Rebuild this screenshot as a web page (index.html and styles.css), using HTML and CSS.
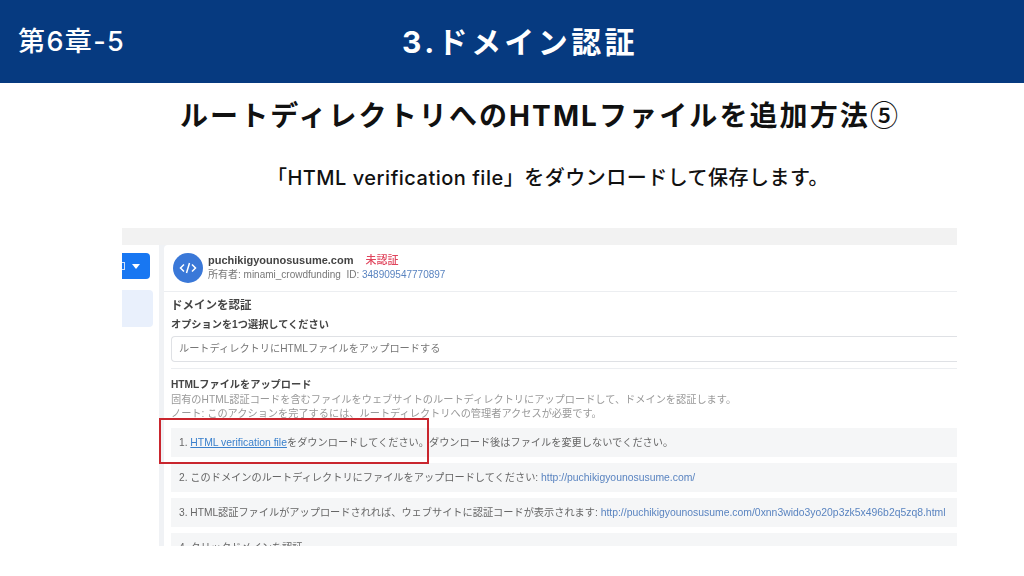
FILE: index.html
```html
<!DOCTYPE html>
<html lang="ja">
  <head>
    <meta charset="UTF-8" />
    <title>第6章-5 ドメイン認証</title>
    <link rel="stylesheet" href="styles.css">
  </head>
  <body>
    <div class="header">
      <div class="chapter">第6章-5</div>
      <h1 class="title">3.ドメイン認証</h1>
    </div>
    <h2 class="heading">ルートディレクトリへのHTMLファイルを追加方法<span class="circled">⑤</span></h2>
    <p class="lead">「HTML verification file」をダウンロードして保存します。</p>

    <div class="shot">
      <div class="shot-top"></div>
      <div class="shot-body">
        <div class="side">
          <div class="side-btn">
            <span class="side-btn-mark"></span>
            <span class="caret"></span>
          </div>
          <div class="side-item"></div>
        </div>
        <div class="card">
          <div class="domain">
            <div class="domain-icon">
              <svg width="18" height="14" viewBox="0 0 18 14" fill="none" stroke="#fff" stroke-width="1.5">
                <path d="M5 3.5 1.5 7 5 10.5M13 3.5 16.5 7 13 10.5M10.5 2 7.5 12" />
              </svg>
            </div>
            <div>
              <div class="domain-name">puchikigyounosusume.com<span class="unverified">未認証</span></div>
              <div class="domain-owner">所有者: minami_crowdfunding&nbsp; ID: <span class="link">348909547770897</span></div>
            </div>
          </div>
          <div class="card-main">
            <div class="label-big">ドメインを認証</div>
            <div class="label">オプションを1つ選択してください</div>
            <div class="select">ルートディレクトリにHTMLファイルをアップロードする</div>
            <div class="rule"></div>
            <div class="label label-upload">HTMLファイルをアップロード</div>
            <div class="desc">固有のHTML認証コードを含むファイルをウェブサイトのルートディレクトリにアップロードして、ドメインを認証します。</div>
            <div class="desc">ノート: このアクションを完了するには、ルートディレクトリへの管理者アクセスが必要です。</div>
            <div class="steps">
              <div class="step">1. <span class="link under">HTML verification file</span>をダウンロードしてください。ダウンロード後はファイルを変更しないでください。</div>
              <div class="step">2. このドメインのルートディレクトリにファイルをアップロードしてください: <span class="link">http://puchikigyounosusume.com/</span></div>
              <div class="step">3. HTML認証ファイルがアップロードされれば、ウェブサイトに認証コードが表示されます: <span class="link">http://puchikigyounosusume.com/0xnn3wido3yo20p3zk5x496b2q5zq8.html</span></div>
              <div class="step">4. クリックドメインを認証</div>
            </div>
          </div>
        </div>
      </div>
      <div class="redbox"></div>
    </div>
  </body>
</html>
```

FILE: styles.css
```css
* {
  margin: 0;
  padding: 0;
  box-sizing: border-box;
}
body {
  width: 1024px;
  height: 576px;
  overflow: hidden;
  background: #fff;
  font-family: "Inter", "Noto Sans CJK JP", sans-serif;
  color: #111;
}
.header {
  height: 83px;
  background: #063a80;
  color: #fff;
  position: relative;
  display: flex;
  justify-content: center;
  align-items: center;
  padding-left: 16px;
}
.chapter {
  position: absolute;
  left: 18px;
  top: 23px;
  font-size: 27px;
  line-height: 38px;
  letter-spacing: 1.4px;
  font-weight: 500;
}
.title {
  font-size: 30px;
  font-weight: 700;
  letter-spacing: 3.4px;
  line-height: 44px;
}
.heading {
  margin-top: 10px;
  height: 42px;
  padding-left: 56px;
  text-align: center;
  font-size: 28px;
  line-height: 42px;
  letter-spacing: 2.1px;
  font-weight: 700;
}
.circled {
  font-family: "Noto Sans CJK JP", sans-serif;
  font-weight: 500;
}
.lead {
  margin-top: 28px;
  padding-left: 72px;
  text-align: center;
  font-size: 20px;
  line-height: 30px;
  letter-spacing: 0.5px;
  font-weight: 500;
}
.shot {
  position: relative;
  width: 835px;
  height: 318px;
  margin: 35px 0 0 122px;
  overflow: hidden;
  background: #f0f2f5;
  filter: blur(0.35px);
}
.shot-top {
  height: 17px;
  background: #f2f2f2;
}
.shot-body {
  display: flex;
  gap: 5px;
  height: 301px;
}
.side {
  width: 37px;
  background: #fff;
  padding-top: 8px;
  flex: none;
}
.side-btn {
  width: 28px;
  height: 26px;
  background: #1877f2;
  border-radius: 0 4px 4px 0;
  display: flex;
  align-items: center;
  gap: 7px;
}
.side-btn-mark {
  width: 3px;
  height: 8px;
  border: 1px solid #cfe2fb;
  border-left: 0;
}
.caret {
  width: 0;
  height: 0;
  border: 4px solid transparent;
  border-top: 5px solid #fff;
  border-bottom: 0;
}
.side-item {
  margin-top: 11px;
  width: 31px;
  height: 37px;
  background: #e9f0fc;
  border-radius: 0 4px 4px 0;
}
.card {
  flex: 1;
  background: #fff;
  border-radius: 4px 0 0 0;
  min-width: 0;
  font-family: "Liberation Sans", "Noto Sans CJK JP", sans-serif;
}
.domain {
  height: 47px;
  padding: 8px 0 0 9px;
  display: flex;
  gap: 5px;
  border-bottom: 1px solid #eceef1;
}
.domain-icon {
  width: 30px;
  height: 30px;
  border-radius: 50%;
  background: #3a78d8;
  display: flex;
  align-items: center;
  justify-content: center;
  flex: none;
}
.domain-name {
  font-size: 11px;
  line-height: 15px;
  font-weight: 700;
  color: #444;
}
.unverified {
  color: #e0445c;
  font-weight: 500;
  margin-left: 12px;
}
.domain-owner {
  font-size: 10px;
  line-height: 14px;
  color: #777;
}
.link {
  color: #5a84c0;
}
.under {
  color: #3a80cc;
  text-decoration: underline;
}
.card-main {
  padding: 3px 0 0 7px;
}
.label-big {
  font-size: 11.5px;
  line-height: 20px;
  font-weight: 700;
  color: #444;
  margin-bottom: 1px;
}
.label {
  font-size: 10.2px;
  line-height: 18px;
  font-weight: 700;
  color: #444;
}
.label-upload {
  line-height: 16px;
}
.select {
  margin-top: 2px;
  height: 26px;
  border: 1px solid #dfe1e5;
  border-right: 0;
  border-radius: 4px 0 0 4px;
  padding-left: 7px;
  font-size: 10.2px;
  line-height: 24px;
  color: #777;
}
.rule {
  height: 1px;
  margin: 6px 0 8px;
  background: #eceef1;
}
.desc {
  font-size: 10.2px;
  line-height: 14px;
  color: #999;
}
.steps {
  margin-top: 7px;
  display: flex;
  flex-direction: column;
  gap: 6px;
}
.step {
  height: 29px;
  background: #f5f6f7;
  padding-left: 8px;
  font-size: 10.2px;
  line-height: 29px;
  color: #666;
  white-space: nowrap;
  overflow: hidden;
}
.step .link {
  font-size: 10.4px;
}
.redbox {
  position: absolute;
  left: 37px;
  top: 190px;
  width: 270px;
  height: 46px;
  border: 2px solid #c9262e;
}
```
